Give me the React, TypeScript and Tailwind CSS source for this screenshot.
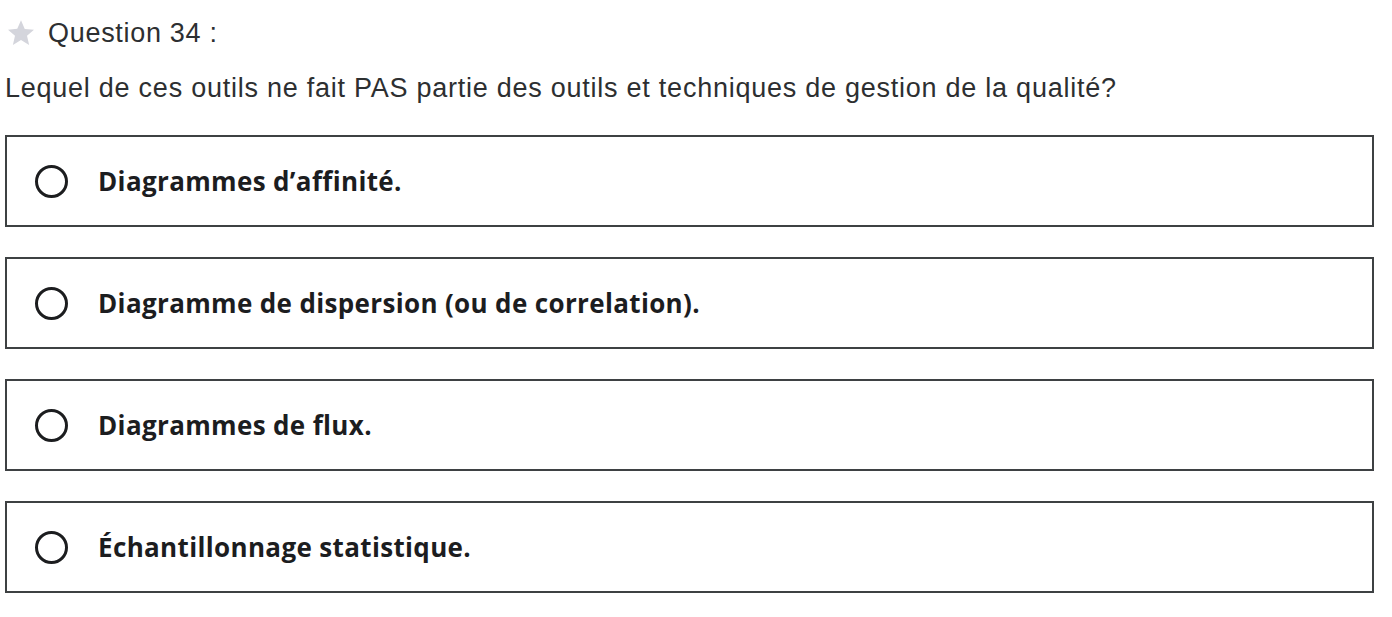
import React from "react";

const options = [
  "Diagrammes d\u2019affinit\u00e9.",
  "Diagramme de dispersion (ou de correlation).",
  "Diagrammes de flux.",
  "\u00c9chantillonnage statistique.",
];

export default function App() {
  return (
    <div className="w-[1392px] h-[617px] bg-white pl-[5px] pr-[18px] pt-[18px] overflow-hidden">
      <div className="flex items-center h-[30px] font-['Liberation_Sans',Arial,sans-serif] text-[27px] tracking-[0.7px] text-[#2d2f31]">
        <svg width="30" height="30" viewBox="0 0 24 24" className="ml-[1px] mr-[12px]">
          <path
            d="M12 1.8l3 6.9 7.4.6-5.6 4.9 1.7 7.3-6.5-3.9-6.5 3.9 1.7-7.3-5.6-4.9 7.4-.6z"
            fill="#d4d5dc"
          />
        </svg>
        <span>Question 34 :</span>
      </div>
      <p className="mt-[25px] font-['Liberation_Sans',Arial,sans-serif] text-[27px] tracking-[0.75px] leading-[30px] text-[#2d2f31]">
        Lequel de ces outils ne fait PAS partie des outils et techniques de gestion de la qualité?
      </p>
      <div className="mt-[32px] flex flex-col gap-[30px]">
        {options.map((o) => (
          <div
            key={o}
            className="h-[92px] border-2 border-[#3e4143] flex items-center pl-[28px]"
          >
            <span className="w-[33px] h-[33px] rounded-full border-[3px] border-[#1c1d1f] shrink-0" />
            <span className="ml-[30px] font-['Open_Sans',sans-serif] font-bold text-[26px] tracking-[0.35px] text-[#1c1d1f]">
              {o}
            </span>
          </div>
        ))}
      </div>
    </div>
  );
}
